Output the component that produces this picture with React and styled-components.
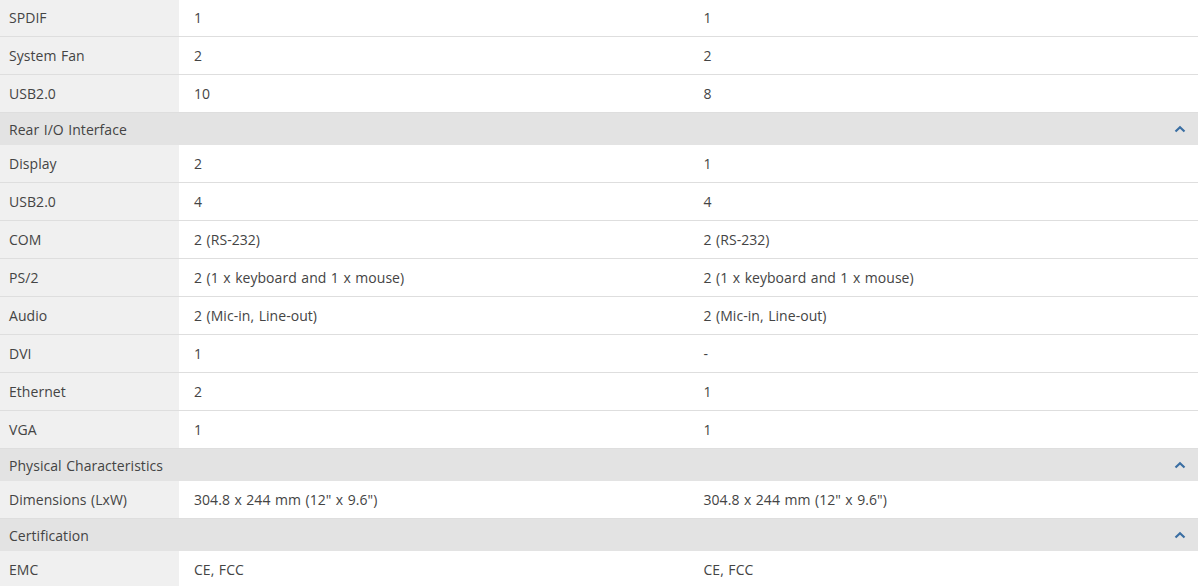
import React from "react";
import styled, { createGlobalStyle } from "styled-components";

const Global = createGlobalStyle`
  html, body { margin: 0; padding: 0; background: #fff; }
  body { font-family: "Open Sans", "Noto Sans", sans-serif; }
`;

const Table = styled.div`
  width: 1198px;
  margin-top: -1px;
  font-size: 14px;
  word-spacing: 0.8px;
  letter-spacing: 0.05px;
  color: #444;
`;

const Row = styled.div`
  display: grid;
  grid-template-columns: 179px 1fr 1fr;
  height: 38px;
  box-sizing: border-box;
  border-bottom: 1px solid #dedede;
`;

const Label = styled.div`
  background: #f0f0f0;
  padding-left: 9px;
  display: flex;
  align-items: center;
`;

const Value = styled.div`
  padding-left: 15px;
  display: flex;
  align-items: center;
`;

const Header = styled.div`
  height: 32px;
  background: #e3e3e3;
  display: flex;
  align-items: center;
  justify-content: space-between;
  padding: 0 12px 0 9px;
  box-sizing: border-box;
`;

const Chevron = () => (
  <svg width="12" height="8" viewBox="0 0 12 8">
    <path d="M1.5 6.5 L6 2.2 L10.5 6.5" fill="none" stroke="#3b6fa3" strokeWidth="2.2" />
  </svg>
);

const data = [
  { type: "row", l: "SPDIF", a: "1", b: "1" },
  { type: "row", l: "System Fan", a: "2", b: "2" },
  { type: "row", l: "USB2.0", a: "10", b: "8" },
  { type: "head", l: "Rear I/O Interface" },
  { type: "row", l: "Display", a: "2", b: "1" },
  { type: "row", l: "USB2.0", a: "4", b: "4" },
  { type: "row", l: "COM", a: "2 (RS-232)", b: "2 (RS-232)" },
  { type: "row", l: "PS/2", a: "2 (1 x keyboard and 1 x mouse)", b: "2 (1 x keyboard and 1 x mouse)" },
  { type: "row", l: "Audio", a: "2 (Mic-in, Line-out)", b: "2 (Mic-in, Line-out)" },
  { type: "row", l: "DVI", a: "1", b: "-" },
  { type: "row", l: "Ethernet", a: "2", b: "1" },
  { type: "row", l: "VGA", a: "1", b: "1" },
  { type: "head", l: "Physical Characteristics" },
  { type: "row", l: "Dimensions (LxW)", a: "304.8 x 244 mm (12\" x 9.6\")", b: "304.8 x 244 mm (12\" x 9.6\")" },
  { type: "head", l: "Certification" },
  { type: "row", l: "EMC", a: "CE, FCC", b: "CE, FCC" },
];

export default function App() {
  return (
    <>
      <Global />
      <Table>
        {data.map((d, i) =>
          d.type === "head" ? (
            <Header key={i}>
              <span>{d.l}</span>
              <Chevron />
            </Header>
          ) : (
            <Row key={i}>
              <Label>{d.l}</Label>
              <Value>{d.a}</Value>
              <Value>{d.b}</Value>
            </Row>
          )
        )}
      </Table>
    </>
  );
}
